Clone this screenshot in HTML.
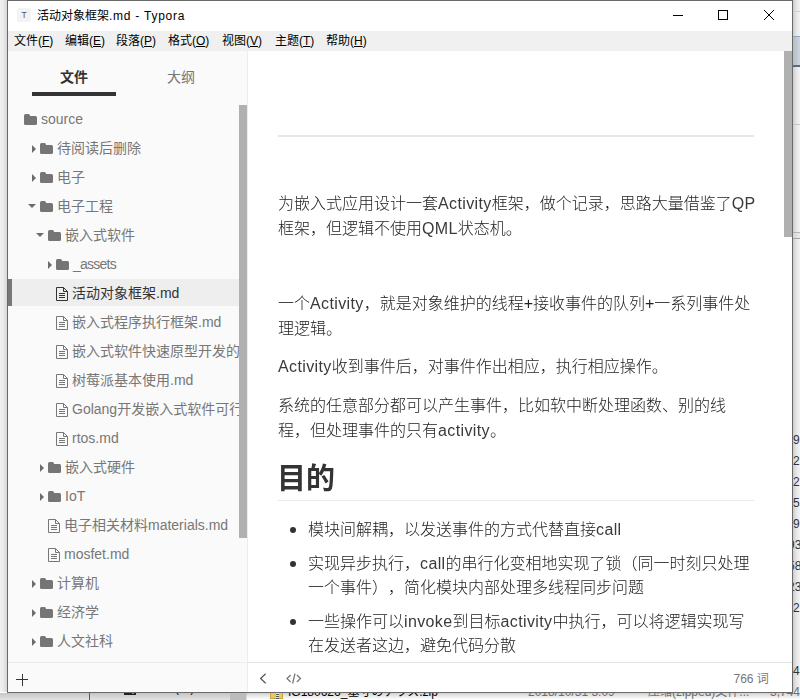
<!DOCTYPE html>
<html lang="zh-CN">
<head>
<meta charset="utf-8">
<title>活动对象框架.md - Typora</title>
<style>
html,body{margin:0;padding:0;}
body{width:800px;height:700px;position:relative;overflow:hidden;background:#fff;
  font-family:"Liberation Sans","Noto Sans CJK SC",sans-serif;color:#333;text-spacing-trim:space-all;}
*{box-sizing:border-box;}
.abs{position:absolute;white-space:nowrap;}
/* desktop behind window */
#bg-left{left:0;top:0;width:8px;height:700px;background:linear-gradient(to right,#f1f1f1 0,#ececec 3px,#d6d6d6 7px);}
#bg-right{left:792px;top:0;width:8px;height:700px;background:linear-gradient(to right,#c4c4c4 0,#e4e4e4 4px,#f3f3f3 8px);}
#bg-bottom{left:0;top:692px;width:800px;height:8px;background:#fff;}
.bt{top:684px;font-size:12px;line-height:17px;color:#6d6d6d;}
.dg{left:793px;font-size:12px;line-height:17px;color:#333;width:20px;}
/* window */
#win{left:7px;top:0;width:786px;height:693px;background:#fff;border:1px solid #6a6a6a;}
#titlebar{left:8px;top:1px;width:784px;height:30px;background:#fff;}
#title{left:37px;top:8px;font-size:12px;line-height:17px;color:#000;}
#menubar{left:8px;top:31px;width:784px;height:20px;background:#f0f0f0;}
.menu{top:33px;font-size:12px;line-height:17px;color:#000;}
.menu u{text-decoration:underline;}
/* sidebar */
#sidebar{left:8px;top:51px;width:240px;height:641px;background:#fafafa;border-right:1px solid #ececec;}
.tab{font-size:14px;line-height:20px;}
.row{font-size:14px;line-height:20px;color:#777;}
.row.active{color:#333;}
#activebg{left:8px;top:279px;width:231px;height:27px;background:#eeeeee;border-left:4px solid #787878;}
.sb{background:#b0b0b0;}
/* content */
.p{font-size:16px;line-height:25px;color:#222;left:278px;font-weight:300;}
.li{font-size:16px;line-height:25px;color:#222;left:308px;font-weight:300;}
.dot{width:6.4px;height:6.4px;border-radius:50%;background:#333;left:289.8px;}

.fold{width:13px;height:11px;}
.fold:before{content:"";position:absolute;left:0;top:0;width:6px;height:4px;background:#757575;border-radius:1.5px 1.5px 0 0;}
.fold:after{content:"";position:absolute;left:0;top:2px;width:13px;height:9px;background:#757575;border-radius:0 1.5px 1.5px 1.5px;}
.ar{width:0;height:0;border-left:4.5px solid #6c6c6c;border-top:4px solid transparent;border-bottom:4px solid transparent;}
.ad{width:0;height:0;border-top:4.8px solid #6c6c6c;border-left:4.2px solid transparent;border-right:4.2px solid transparent;}
.fi{width:13px;height:14px;}
.l{letter-spacing:0.37px;color:#3a3a3a;}
.p,.li,.h2{will-change:transform;}
</style>
</head>
<body>
<div class="abs" id="bg-left"></div>
<div class="abs" id="bg-right"></div>
<div class="abs" style="left:793px;top:11px;width:7px;height:1px;background:#cfcfcf"></div>
<div class="abs" style="left:793px;top:36px;width:7px;height:31px;background:linear-gradient(to right,#b4bcc4,#cfd6dd);border-top:1px solid #8fa6bd;border-bottom:2px solid #5f6a75"></div>
<div class="abs" style="left:793px;top:124px;width:7px;height:1px;background:#c4c4c4"></div>
<div class="abs" style="left:793px;top:232px;width:7px;height:1px;background:#b4b4b4"></div>
<div class="abs" style="left:793px;top:233px;width:7px;height:5px;background:linear-gradient(to right,#d4d4d4,#ebebeb)"></div>
<div class="abs" style="left:793px;top:238px;width:7px;height:1px;background:#a4a4a4"></div>
<div class="abs dg" style="top:432px">9</div>
<div class="abs dg" style="top:453px">2</div>
<div class="abs dg" style="top:474px">2</div>
<div class="abs dg" style="top:495px">5</div>
<div class="abs dg" style="top:516px">9</div>
<div class="abs dg" style="top:537px;left:788px">93</div>
<div class="abs dg" style="top:558px;left:788px">58</div>
<div class="abs dg" style="top:579px;left:788px">23</div>
<div class="abs dg" style="top:600px">2</div>
<div class="abs dg" style="top:663px">4</div>
<div class="abs" id="bg-bottom"></div>
<div class="abs" style="left:0;top:693px;width:247px;height:7px;background:linear-gradient(to bottom,#c6c6c6,#e2e2e2)"></div>
<div class="abs" style="left:247px;top:693px;width:553px;height:7px;background:linear-gradient(to bottom,#d2d2d2,#f6f6f6 5px,#fff)"></div>
<div class="abs" style="left:89px;top:693px;width:1px;height:7px;background:#5a5a5a"></div>
<div class="abs" style="left:124px;top:692px;width:12px;height:3px;background:#222"></div>
<div class="abs" style="left:132px;top:692px;width:2px;height:2px;background:#2c2"></div>
<div class="abs" style="left:230px;top:693px;width:16px;height:7px;background:#bcbcbc"></div>
<div class="abs bt" style="left:175px;top:680px;color:#000">(E:)</div>
<div class="abs" style="left:270px;top:686px;width:13px;height:13px;background:#e9c95f;border:1px solid #c9a53a"></div>
<div class="abs" style="left:276px;top:686px;width:3px;height:13px;background:repeating-linear-gradient(to bottom,#555 0,#555 1px,#f5e6a8 1px,#f5e6a8 2px)"></div>
<div class="abs bt" style="left:288px;color:#000">IG180626_基寸のナラス.zip</div>
<div class="abs bt" style="left:528px">2018/10/31 3:09</div>
<div class="abs bt" style="left:648px">压缩(zipped)文件...</div>
<div class="abs bt" style="left:770px">3,744</div>

<div class="abs" id="win"></div>
<div class="abs" id="titlebar"></div>
<div class="abs" id="title">活动对象框架<span style="letter-spacing:0.75px">.md - Typora</span></div>

<!-- window controls -->
<div class="abs" style="left:673px;top:15px;width:10px;height:1px;background:#000"></div>
<div class="abs" style="left:718px;top:10px;width:10px;height:10px;border:1px solid #000"></div>
<svg class="abs" style="left:763px;top:9px" width="12" height="12" viewBox="0 0 12 12"><path d="M1 1L11 11M11 1L1 11" stroke="#000" stroke-width="1" fill="none"/></svg>
<!-- app icon -->
<div class="abs" style="left:17px;top:8px;width:14px;height:14px;background:#f3f3f3;border-radius:2px;font-size:8.5px;line-height:14px;text-align:center;color:#555">T</div>
<div class="abs" id="menubar"></div>
<div class="abs menu" style="left:14px">文件(<u>F</u>)</div>
<div class="abs menu" style="left:65px">编辑(<u>E</u>)</div>
<div class="abs menu" style="left:116px">段落(<u>P</u>)</div>
<div class="abs menu" style="left:168px">格式(<u>O</u>)</div>
<div class="abs menu" style="left:222px">视图(<u>V</u>)</div>
<div class="abs menu" style="left:275px">主题(<u>T</u>)</div>
<div class="abs menu" style="left:326px">帮助(<u>H</u>)</div>

<div class="abs" id="sidebar"></div>
<div class="abs tab" style="left:60px;top:67px;font-weight:bold;color:#333">文件</div>
<div class="abs" style="left:32px;top:92px;width:84px;height:4px;background:#333"></div>
<div class="abs tab" style="left:167px;top:67px;color:#777">大纲</div>

<div class="abs" id="activebg"></div>
<div class="abs row" style="left:41px;top:109px">source</div>
<div class="abs row" style="left:57px;top:138px">待阅读后删除</div>
<div class="abs row" style="left:57px;top:167px">电子</div>
<div class="abs row" style="left:57px;top:196px">电子工程</div>
<div class="abs row" style="left:65px;top:225px">嵌入式软件</div>
<div class="abs row" style="left:73px;top:254px;letter-spacing:-0.75px">_assets</div>
<div class="abs row active" style="left:72px;top:283px">活动对象框架.md</div>
<div class="abs row" style="left:72px;top:312px">嵌入式程序执行框架.md</div>
<div class="abs row" style="left:72px;top:341px;width:167px;overflow:hidden">嵌入式软件快速原型开发的方法.md</div>
<div class="abs row" style="left:72px;top:370px">树莓派基本使用.md</div>
<div class="abs row" style="left:72px;top:399px;width:167px;overflow:hidden">Golang开发嵌入式软件可行性.md</div>
<div class="abs row" style="left:72px;top:428px">rtos.md</div>
<div class="abs row" style="left:65px;top:457px">嵌入式硬件</div>
<div class="abs row" style="left:65px;top:486px">IoT</div>
<div class="abs row" style="left:64px;top:515px">电子相关材料materials.md</div>
<div class="abs row" style="left:64px;top:544px">mosfet.md</div>
<div class="abs row" style="left:57px;top:573px">计算机</div>
<div class="abs row" style="left:57px;top:602px">经济学</div>
<div class="abs row" style="left:57px;top:631px">人文社科</div>

<div class="abs fold" style="left:24px;top:114px"></div>
<div class="abs ar" style="left:32px;top:145.0px"></div>
<div class="abs fold" style="left:40px;top:143px"></div>
<div class="abs ar" style="left:32px;top:174.0px"></div>
<div class="abs fold" style="left:40px;top:172px"></div>
<div class="abs ad" style="left:28px;top:204px"></div>
<div class="abs fold" style="left:40px;top:201px"></div>
<div class="abs ad" style="left:36px;top:233px"></div>
<div class="abs fold" style="left:48px;top:230px"></div>
<div class="abs ar" style="left:48px;top:261.0px"></div>
<div class="abs fold" style="left:56px;top:259px"></div>
<div class="abs ar" style="left:40px;top:464.0px"></div>
<div class="abs fold" style="left:48px;top:462px"></div>
<div class="abs ar" style="left:40px;top:493.0px"></div>
<div class="abs fold" style="left:48px;top:491px"></div>
<div class="abs ar" style="left:32px;top:580.0px"></div>
<div class="abs fold" style="left:40px;top:578px"></div>
<div class="abs ar" style="left:32px;top:609.0px"></div>
<div class="abs fold" style="left:40px;top:607px"></div>
<div class="abs ar" style="left:32px;top:638.0px"></div>
<div class="abs fold" style="left:40px;top:636px"></div>
<svg class="abs fi" style="left:56px;top:287px" width="13" height="14" viewBox="0 0 13 14"><path d="M0.5 0.5H7.5L11.5 4.5V13.5H0.5Z M7.5 0.5V4.5H11.5" fill="none" stroke="#333" stroke-width="1"/><path d="M3 6.5H9M3 8.5H9M3 10.5H9" fill="none" stroke="#333" stroke-width="1"/></svg>
<svg class="abs fi" style="left:56px;top:316px" width="13" height="14" viewBox="0 0 13 14"><path d="M0.5 0.5H7.5L11.5 4.5V13.5H0.5Z M7.5 0.5V4.5H11.5" fill="none" stroke="#777" stroke-width="1"/><path d="M3 6.5H9M3 8.5H9M3 10.5H9" fill="none" stroke="#777" stroke-width="1"/></svg>
<svg class="abs fi" style="left:56px;top:345px" width="13" height="14" viewBox="0 0 13 14"><path d="M0.5 0.5H7.5L11.5 4.5V13.5H0.5Z M7.5 0.5V4.5H11.5" fill="none" stroke="#777" stroke-width="1"/><path d="M3 6.5H9M3 8.5H9M3 10.5H9" fill="none" stroke="#777" stroke-width="1"/></svg>
<svg class="abs fi" style="left:56px;top:374px" width="13" height="14" viewBox="0 0 13 14"><path d="M0.5 0.5H7.5L11.5 4.5V13.5H0.5Z M7.5 0.5V4.5H11.5" fill="none" stroke="#777" stroke-width="1"/><path d="M3 6.5H9M3 8.5H9M3 10.5H9" fill="none" stroke="#777" stroke-width="1"/></svg>
<svg class="abs fi" style="left:56px;top:403px" width="13" height="14" viewBox="0 0 13 14"><path d="M0.5 0.5H7.5L11.5 4.5V13.5H0.5Z M7.5 0.5V4.5H11.5" fill="none" stroke="#777" stroke-width="1"/><path d="M3 6.5H9M3 8.5H9M3 10.5H9" fill="none" stroke="#777" stroke-width="1"/></svg>
<svg class="abs fi" style="left:56px;top:432px" width="13" height="14" viewBox="0 0 13 14"><path d="M0.5 0.5H7.5L11.5 4.5V13.5H0.5Z M7.5 0.5V4.5H11.5" fill="none" stroke="#777" stroke-width="1"/><path d="M3 6.5H9M3 8.5H9M3 10.5H9" fill="none" stroke="#777" stroke-width="1"/></svg>
<svg class="abs fi" style="left:48px;top:519px" width="13" height="14" viewBox="0 0 13 14"><path d="M0.5 0.5H7.5L11.5 4.5V13.5H0.5Z M7.5 0.5V4.5H11.5" fill="none" stroke="#777" stroke-width="1"/><path d="M3 6.5H9M3 8.5H9M3 10.5H9" fill="none" stroke="#777" stroke-width="1"/></svg>
<svg class="abs fi" style="left:48px;top:548px" width="13" height="14" viewBox="0 0 13 14"><path d="M0.5 0.5H7.5L11.5 4.5V13.5H0.5Z M7.5 0.5V4.5H11.5" fill="none" stroke="#777" stroke-width="1"/><path d="M3 6.5H9M3 8.5H9M3 10.5H9" fill="none" stroke="#777" stroke-width="1"/></svg>
<div class="abs sb" style="left:239px;top:105px;width:8px;height:432.7px"></div>
<div class="abs" style="left:8px;top:662px;width:239px;height:1px;background:#ececec"></div>
<div class="abs" style="left:16px;top:679px;width:12px;height:1px;background:#333"></div>
<div class="abs" style="left:21.5px;top:674px;width:1px;height:12px;background:#333"></div>

<!-- content -->
<div class="abs" style="left:278px;top:135px;width:476px;height:2px;background:#e7e7e7"></div>
<div class="abs p" style="top:191px">为嵌入式应用设计一套<span class="l">Activity</span>框架，做个记录，思路大量借鉴了<span class="l">QP</span></div>
<div class="abs p" style="top:216px">框架，但逻辑不使用<span class="l">QML</span>状态机。</div>
<div class="abs p" style="top:291px">一个<span class="l">Activity</span>，就是对象维护的线程+接收事件的队列+一系列事件处</div>
<div class="abs p" style="top:316px">理逻辑。</div>
<div class="abs p" style="top:354px"><span class="l">Activity</span>收到事件后，对事件作出相应，执行相应操作。</div>
<div class="abs p" style="top:393px">系统的任意部分都可以产生事件，比如软中断处理函数、别的线</div>
<div class="abs p" style="top:418px">程，但处理事件的只有<span class="l">activity</span>。</div>
<div class="abs h2" style="left:277px;top:459px;font-size:29px;line-height:40px;font-weight:bold;color:#333">目的</div>
<div class="abs" style="left:278px;top:500px;width:476px;height:1px;background:#e9e9e9"></div>
<div class="abs dot" style="top:526.8px"></div>
<div class="abs li" style="top:517px">模块间解耦，以发送事件的方式代替直接<span class="l">call</span></div>
<div class="abs dot" style="top:560.8px"></div>
<div class="abs li" style="top:551px">实现异步执行，<span class="l">call</span>的串行化变相地实现了锁（同一时刻只处理</div>
<div class="abs li" style="top:575px">一个事件），简化模块内部处理多线程同步问题</div>
<div class="abs dot" style="top:618.8px"></div>
<div class="abs li" style="top:609px">一些操作可以<span class="l">invoke</span>到目标<span class="l">activity</span>中执行，可以将逻辑实现写</div>
<div class="abs li" style="top:633px">在发送者这边，避免代码分散</div>

<div class="abs" style="left:248px;top:662px;width:544px;height:1px;background:#e3e3e3"></div>
<div class="abs" style="left:733.5px;top:671px;font-size:12px;line-height:17px;color:#777">766 词</div>

<svg class="abs" style="left:258px;top:672px" width="10" height="13" viewBox="0 0 10 13"><path d="M7.6 1.7L2.6 6.5L7.6 11.3" stroke="#555" stroke-width="1.2" fill="none"/></svg>
<svg class="abs" style="left:286px;top:672px" width="16" height="13" viewBox="0 0 16 13"><path d="M4.6 3L1 6.5L4.6 10M10.9 3L14.5 6.5L10.9 10M9 1.5L6.6 11.5" stroke="#777" stroke-width="1.25" fill="none"/></svg>
<div class="abs sb" style="left:784px;top:51px;width:8px;height:186px"></div>
</body>
</html>
